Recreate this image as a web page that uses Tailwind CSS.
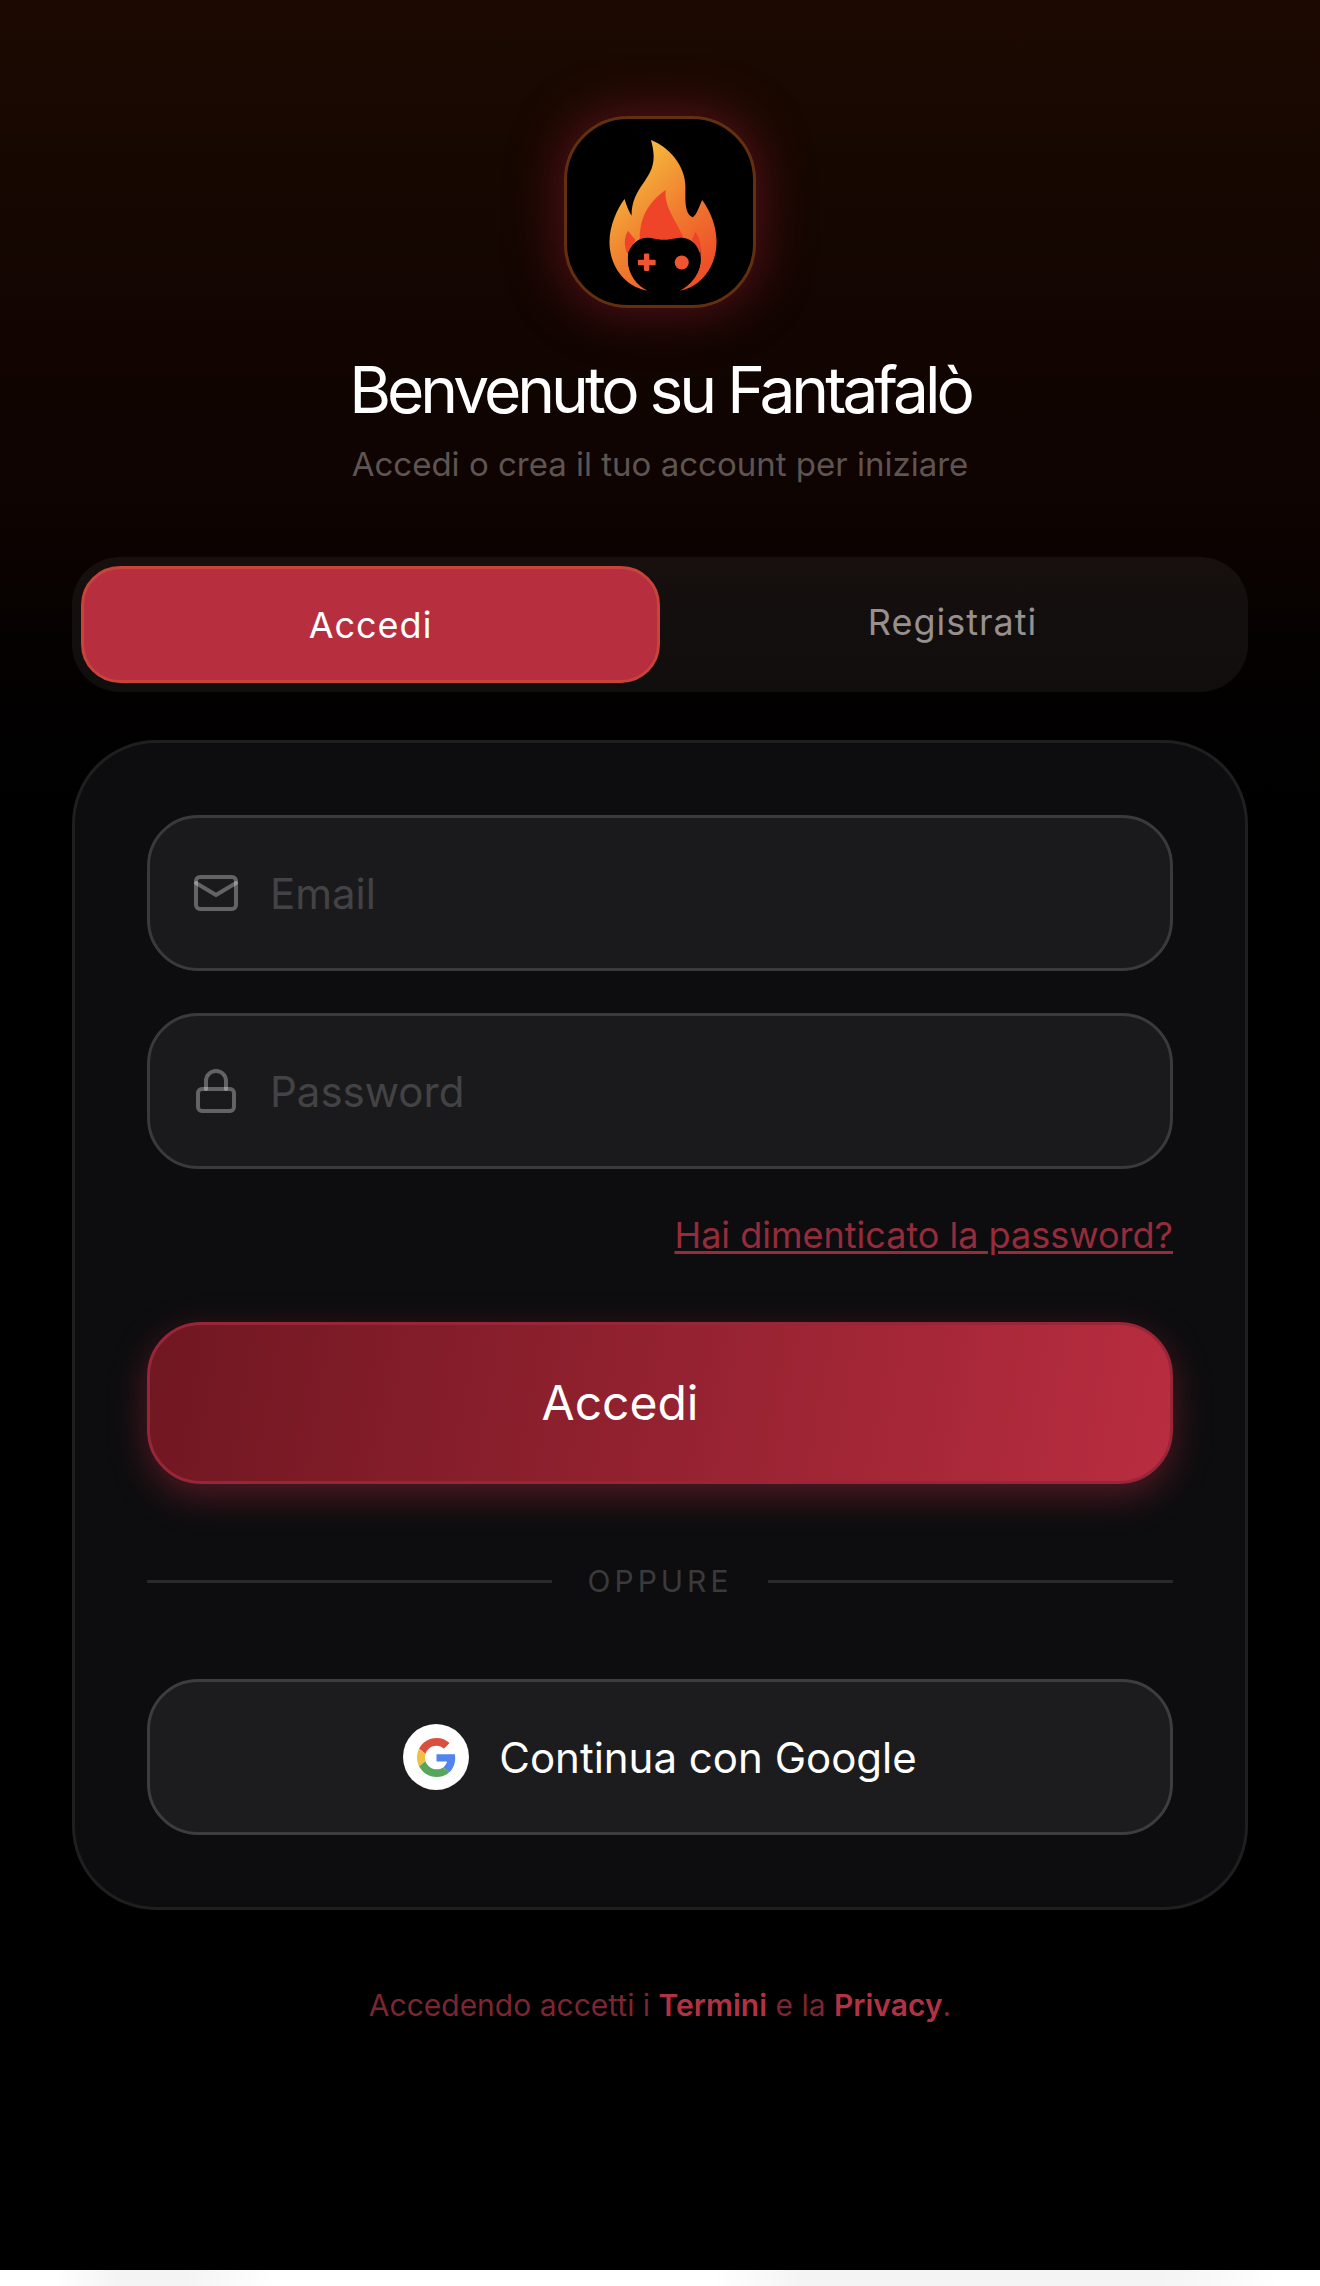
<!DOCTYPE html>
<html lang="it">
<head>
<meta charset="utf-8">
<meta name="viewport" content="width=device-width, initial-scale=1">
<title>Fantafalò – Accedi</title>
<script src="https://cdn.jsdelivr.net/npm/@tailwindcss/browser@4"></script>
</head>
<body class="flex min-h-screen flex-col bg-white font-['Inter',sans-serif] text-white">
<main class="flex grow flex-col items-center bg-black bg-linear-to-b from-[#1c0a02] via-[#0c0301] via-24% to-black to-42% px-[72px] pt-[116px]">

  <!-- Logo -->
  <div class="size-[192px] overflow-hidden rounded-[64px] border-3 border-[#63300f] bg-black shadow-[0_0_48px_6px_rgba(140,25,45,0.5)]">
    <svg viewBox="82 87 556 556" class="size-full" role="img" aria-label="Fantafalò">
      <defs>
        <linearGradient id="flame" x1="240" y1="250" x2="500" y2="520" gradientUnits="userSpaceOnUse">
          <stop offset="0" stop-color="#f5b83d"/><stop offset="0.5" stop-color="#f08030"/><stop offset="1" stop-color="#ee5029"/>
        </linearGradient>
      </defs>
      <path fill="url(#flame)" d="M333 150C385 170 436 225 436 290C436 325 432 372 458 381C472 370 478 345 486 329C510 362 529 405 529 455C529 530 480 590 420 600C455 575 482 548 482 505L480 470L265 470L264 505C264 545 290 578 323 600C258 590 209 530 209 455C209 405 232 355 254 326C260 345 266 362 275 376C275 290 341 270 341 200C341 180 337 165 333 150Z"/>
      <path fill="#ee4528" d="M377 299C372 350 405 385 430 440L430 470L300 460C295 385 325 335 377 299ZM265 421C272 432 280 440 287 448L262 490C252 465 252 440 265 421ZM466 425C459 436 458 442 456 448L480 490C485 465 478 440 466 425Z"/>
      <path fill="#000" d="M320 442C340 442 350 448 372 448C394 448 405 442 425 442C462 444 481 475 481 510C481 550 450 585 420 600L323 600C290 585 264 550 264 510C264 475 283 444 320 442Z"/>
      <path fill="#ee5530" d="M315 489h10q3 0 3 3v16h16q3 0 3 3v10q0 3-3 3h-16v14q0 3-3 3h-10q-3 0-3-3v-14h-15q-3 0-3-3v-10q0-3 3-3h15v-16q0-3 3-3Z"/>
      <circle cx="425" cy="516" r="21" fill="#ee5530"/>
    </svg>
  </div>

  <h1 class="mt-[42px] text-[64px] leading-[80px] tracking-[-4px]">Benvenuto su Fantafalò</h1>
  <p class="mt-[14px] text-[33px] leading-[40px] text-[#5e5552]">Accedi o crea il tuo account per iniziare</p>

  <div class="mt-[73px] flex w-full gap-[6px] rounded-[48px] bg-white/5 p-[9px]">
    <button type="button" class="h-[117px] flex-1 rounded-[39px] border-3 border-[#c8433a] bg-[#b72f3f] text-[36px] tracking-[1px]">Accedi</button>
    <button type="button" class="h-[111px] flex-1 rounded-[39px] text-[36px] tracking-[1px] text-[#96908e]">Registrati</button>
  </div>

  <form class="mt-[48px] flex w-full flex-col rounded-[84px] border-3 border-[#1f1f20] bg-[#0d0d0f] p-[72px]">
    <label class="flex h-[156px] items-center gap-[30px] rounded-[51px] border-3 border-[#3a3a3c] bg-[#1a1a1c] px-[42px]">
      <svg viewBox="0 0 24 24" class="size-12 shrink-0 fill-none stroke-white/32 stroke-2" stroke-linecap="round" stroke-linejoin="round" aria-hidden="true"><rect x="2" y="4" width="20" height="16" rx="2"/><path d="M2 7l10 6 10-6"/></svg>
      <input type="email" aria-label="Email" placeholder="Email" class="min-w-0 grow bg-transparent text-[42px] outline-none placeholder:text-[#434345]">
    </label>
    <label class="mt-[42px] flex h-[156px] items-center gap-[30px] rounded-[51px] border-3 border-[#3a3a3c] bg-[#1a1a1c] px-[42px]">
      <svg viewBox="0 0 24 24" class="size-12 shrink-0 fill-none stroke-white/32 stroke-2" stroke-linecap="round" stroke-linejoin="round" aria-hidden="true"><rect x="3" y="11" width="18" height="11" rx="2"/><path d="M7 11V7a5 5 0 0 1 10 0v4"/></svg>
      <input type="password" aria-label="Password" placeholder="Password" class="min-w-0 grow bg-transparent text-[42px] outline-none placeholder:text-[#434345]">
    </label>
    <a href="#" class="mt-[42px] self-end text-[36px] leading-[48px] text-[#952c3c] underline decoration-3 underline-offset-3">Hai dimenticato la password?</a>
    <button type="submit" class="mt-[63px] h-[162px] rounded-[54px] border-3 border-[#982638] bg-linear-100 from-[#701721] to-[#b92d40] pr-20 text-[48px] shadow-[0_12px_36px_rgba(185,45,64,0.4)]">Accedi</button>
    <div class="mt-[78px] flex items-center gap-[36px]">
      <span class="h-[3px] grow bg-[#29292b]"></span>
      <span class="text-[30px] leading-[39px] tracking-[4px] text-[#3a3a3c]">OPPURE</span>
      <span class="h-[3px] grow bg-[#29292b]"></span>
    </div>
    <button type="button" class="mt-[78px] flex h-[156px] items-center justify-center gap-[30px] rounded-[51px] border-3 border-[#3d3d3f] bg-[#1c1c1e] text-[42px]">
      <span class="flex size-[66px] items-center justify-center rounded-full bg-white">
        <svg viewBox="0 0 48 48" class="size-[39px]" aria-hidden="true">
          <path fill="#d9503f" d="M24 9.5c3.54 0 6.71 1.22 9.21 3.6l6.85-6.85C35.9 2.38 30.47 0 24 0 14.62 0 6.51 5.38 2.56 13.22l7.98 6.19C12.43 13.72 17.74 9.5 24 9.5z"/>
          <path fill="#5383ec" d="M46.98 24.55c0-1.57-.15-3.09-.38-4.55H24v9.02h12.94c-.58 2.96-2.26 5.48-4.78 7.18l7.73 6c4.51-4.18 7.09-10.36 7.09-17.65z"/>
          <path fill="#f0c044" d="M10.53 28.59c-.48-1.45-.76-2.99-.76-4.59s.27-3.14.76-4.59l-7.98-6.19C.92 16.46 0 20.12 0 24c0 3.88.92 7.54 2.56 10.78l7.97-6.19z"/>
          <path fill="#58a55c" d="M24 48c6.48 0 11.93-2.13 15.89-5.81l-7.73-6c-2.15 1.45-4.92 2.3-8.16 2.3-6.26 0-11.57-4.22-13.47-9.91l-7.98 6.19C6.51 42.62 14.62 48 24 48z"/>
        </svg>
      </span>
      Continua con Google
    </button>
  </form>

  <p class="mt-[75px] pb-[60px] text-[30px] leading-[40px] text-[#7c2533]">Accedendo accetti i <a href="#" class="font-semibold text-[#b23244]">Termini</a> e la <a href="#" class="font-semibold text-[#b23244]">Privacy</a>.</p>
</main>
<div class="h-4 shrink-0 bg-[linear-gradient(90deg,#fff_4%,#f4f4f4_9%,#f4f4f4_14%,#fff_21%,#fff_54%,#f4f4f4_61%,#f4f4f4_88%,#fff_97%)]"></div>
</body>
</html>
